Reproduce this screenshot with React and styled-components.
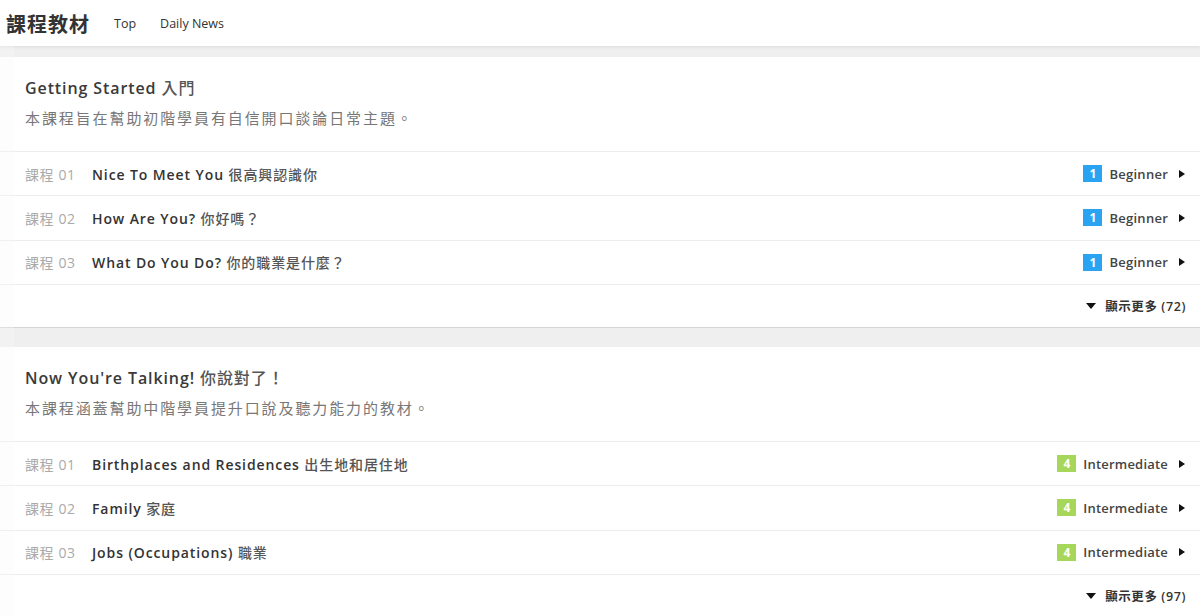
import React from "react";
import styled, { createGlobalStyle } from "styled-components";

const Global = createGlobalStyle`
  html, body { margin: 0; padding: 0; }
  body {
    background: #efefef;
    font-family: "Open Sans", "Noto Sans CJK TC", sans-serif;
    color: #333;
  }
`;

const EdgeShade = styled.div`
  position: fixed;
  left: 0;
  top: 46px;
  bottom: 0;
  width: 14px;
  background: rgba(247, 247, 247, 0.3);
  pointer-events: none;
`;

const Header = styled.header`
  height: 46px;
  background: #fff;
  display: flex;
  align-items: center;
  padding-left: 6px;
  gap: 24px;
  box-shadow: 0 1px 3px rgba(0, 0, 0, 0.08);
  position: relative;
`;

const Brand = styled.div`
  font-family: "Noto Sans CJK TC", sans-serif;
  font-size: 20px;
  font-weight: 700;
  color: #333;
  letter-spacing: 1px;
`;

const NavLink = styled.a`
  font-size: 12.5px;
  color: #333;
  text-decoration: none;
`;

const Main = styled.main`
  padding-top: 11px;
  display: flex;
  flex-direction: column;
  gap: 19px;
`;

const Card = styled.section`
  background: #fff;
  border-bottom: 1px solid #d4d4d4;
`;

const CardHead = styled.div`
  padding: 19px 25px 21px;
  display: flex;
  flex-direction: column;
  gap: 6px;
`;

const CardTitle = styled.h2`
  margin: 0;
  font-size: 16px;
  line-height: 24px;
  font-weight: 600;
  color: #3a3a3a;
  letter-spacing: 0.9px;
`;

const Cjk = styled.span`
  font-weight: 500;
  color: #555;
`;

const CardDesc = styled.p`
  margin: 0;
  font-size: 15px;
  line-height: 24px;
  color: #777;
  letter-spacing: 1.9px;
`;

const Row = styled.div`
  height: 43.33px;
  border-top: 1px solid #ececec;
  display: flex;
  align-items: center;
  padding: 0 14px 0 25px;
`;

const LessonNo = styled.span`
  width: 67px;
  flex: none;
  font-size: 14px;
  color: #aaa;
  letter-spacing: 0.6px;
`;

const LessonTitle = styled.span`
  flex: 1;
  font-size: 14px;
  font-weight: 600;
  color: #333;
  letter-spacing: 0.9px;
`;

const Badge = styled.span`
  width: 19px;
  height: 17px;
  display: flex;
  align-items: center;
  justify-content: center;
  background: ${(p) => p.$color};
  color: #fff;
  font-size: 12px;
  font-weight: 700;
  margin-right: 7px;
`;

const Level = styled.span`
  font-size: 13px;
  font-weight: 600;
  color: #444;
  letter-spacing: ${(p) => p.$spacing};
`;

const RightArrow = styled.span`
  width: 0;
  height: 0;
  border-top: 4px solid transparent;
  border-bottom: 4px solid transparent;
  border-left: 6px solid #111;
  margin-left: 11px;
  margin-right: 1px;
`;

const MoreRow = styled.div`
  height: 42px;
  border-top: 1px solid #ececec;
  display: flex;
  align-items: center;
  justify-content: flex-end;
  padding-right: 14px;
  font-size: 12.5px;
  font-weight: 600;
  color: #333;
  letter-spacing: 0.6px;
`;

const DownArrow = styled.span`
  width: 0;
  height: 0;
  border-left: 5px solid transparent;
  border-right: 5px solid transparent;
  border-top: 6px solid #111;
  margin-right: 9px;
`;

const courses = [
  {
    title: ["Getting Started ", "入門"],
    desc: "本課程旨在幫助初階學員有自信開口談論日常主題。",
    level: "Beginner",
    spacing: "0.25px",
    num: "1",
    color: "#2aa3f3",
    more: 72,
    lessons: [
      ["Nice To Meet You ", "很高興認識你"],
      ["How Are You? ", "你好嗎？"],
      ["What Do You Do? ", "你的職業是什麼？"],
    ],
  },
  {
    title: ["Now You're Talking! ", "你說對了！"],
    desc: "本課程涵蓋幫助中階學員提升口說及聽力能力的教材。",
    level: "Intermediate",
    spacing: "0.2px",
    num: "4",
    color: "#a6d65a",
    more: 97,
    lessons: [
      ["Birthplaces and Residences ", "出生地和居住地"],
      ["Family ", "家庭"],
      ["Jobs (Occupations) ", "職業"],
    ],
  },
];

export default function App() {
  return (
    <>
      <Global />
      <Header>
        <Brand>課程教材</Brand>
        <NavLink href="#">Top</NavLink>
        <NavLink href="#">Daily News</NavLink>
      </Header>
      <Main>
        {courses.map((c) => (
          <Card key={c.title[0]}>
            <CardHead>
              <CardTitle>
                {c.title[0]}
                <Cjk>{c.title[1]}</Cjk>
              </CardTitle>
              <CardDesc>{c.desc}</CardDesc>
            </CardHead>
            {c.lessons.map((l, i) => (
              <Row key={l[0]}>
                <LessonNo>課程 0{i + 1}</LessonNo>
                <LessonTitle>
                  {l[0]}
                  <Cjk>{l[1]}</Cjk>
                </LessonTitle>
                <Badge $color={c.color}>{c.num}</Badge>
                <Level $spacing={c.spacing}>{c.level}</Level>
                <RightArrow />
              </Row>
            ))}
            <MoreRow>
              <DownArrow />
              顯示更多 ({c.more})
            </MoreRow>
          </Card>
        ))}
      </Main>
      <EdgeShade />
    </>
  );
}
